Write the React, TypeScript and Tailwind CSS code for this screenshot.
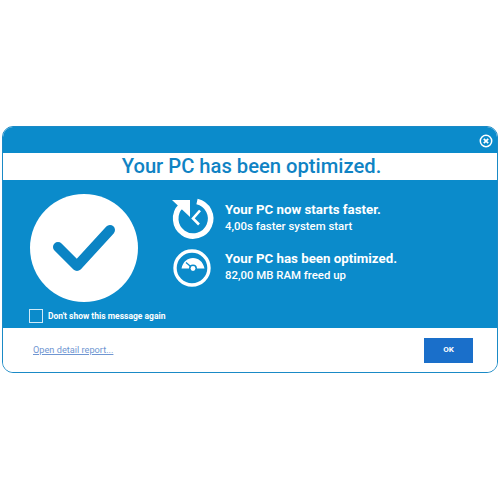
import { Fragment } from "react";

const rows = [
  { title: "Your PC now starts faster.", sub: "4,00s faster system start", icon: "clock" },
  { title: "Your PC has been optimized.", sub: "82,00 MB RAM freed up", icon: "gauge" },
];

function ClockIcon() {
  return (
    <svg width="46" height="46" viewBox="0 0 46 46" fill="none">
      <path d="M11 10A17.5 17.5 0 1 0 27 5.5" stroke="#fff" strokeWidth="5.6" />
      <path d="M2 4h18v17z" fill="#fff" />
      <path d="M30 14.5l-7 8 6 6" stroke="#fff" strokeWidth="2.6" />
    </svg>
  );
}

function GaugeIcon() {
  return (
    <svg width="42" height="42" viewBox="0 0 42 42" fill="none">
      <circle cx="21" cy="21" r="17" stroke="#fff" strokeWidth="3.4" />
      <path d="M10.5 21.5C12 14.5 16.5 11 22 11s10 3.5 11.5 10.5H26a4 4 0 0 0-8 0z" fill="#fff" />
      <path d="M22 21.5l-7-6" stroke="#0b8bcb" strokeWidth="1.3" />
      <circle cx="22" cy="21.5" r="2.4" fill="#fff" />
    </svg>
  );
}

export default function App() {
  return (
    <main className="w-[500px] h-[500px] bg-white px-[2px] pt-[126px] font-['Roboto',sans-serif]">
      <div className="h-[247px] rounded-[11px] border border-[#1a8ac6] overflow-hidden flex flex-col">
        <div className="h-[26px] bg-[#0b8bcb] flex items-center justify-end pr-[4px]">
          <svg width="14" height="14" viewBox="0 0 14 14" fill="none" className="mt-[1px]">
            <circle cx="7" cy="7" r="5.7" stroke="#fff" strokeWidth="1.5" />
            <path d="M4.8 4.8l4.4 4.4M9.2 4.8l-4.4 4.4" stroke="#fff" strokeWidth="1.7" />
          </svg>
        </div>

        <h1 className="h-[27px] bg-white pl-[3px] text-center text-[#0f83c4] text-[20.2px] font-medium leading-[27px]">
          Your PC has been optimized.
        </h1>

        <div className="h-[148px] bg-[#0b8bcb] flex">
          <div className="w-[170px] shrink-0 pl-[27px] pt-[14px] flex flex-col">
            <div className="w-[108px] h-[108px] rounded-full bg-white flex items-center justify-center">
              <svg width="64" height="50" viewBox="0 0 64 50" fill="none">
                <path d="M6 24l19 19L58 7" stroke="#0b84c4" strokeWidth="10" strokeLinecap="round" strokeLinejoin="round" />
              </svg>
            </div>
            <label className="mt-[7px] -ml-[1px] flex items-center gap-[5px] whitespace-nowrap">
              <span className="w-[14px] h-[14px] shrink-0 border border-[#cfeaf8] block" />
              <span className="text-white text-[8.5px] font-bold">Don't show this message again</span>
            </label>
          </div>

          <div className="pt-[15px] flex flex-col gap-[2px]">
            {rows.map((row) => (
              <Fragment key={row.title}>
                <div className="h-[47px] flex items-center -ml-[4px]">
                  <div className={row.icon === "clock" ? "w-[56px] pl-[1px]" : "w-[56px] pl-[2px]"}>
                    {row.icon === "clock" ? <ClockIcon /> : <GaugeIcon />}
                  </div>
                  <div className="text-white -mt-[2px]">
                    <p className="text-[13.3px] font-bold leading-[18px]">{row.title}</p>
                    <p className="text-[11.4px] font-medium leading-[15px]">{row.sub}</p>
                  </div>
                </div>
              </Fragment>
            ))}
          </div>
        </div>

        <div className="flex-1 bg-white flex items-center justify-between pl-[30px] pr-[24px]">
          <a className="text-[#6f96d2] text-[9.2px] underline">Open detail report...</a>
          <button className="w-[49px] h-[25px] bg-[#1a6fca] text-white text-[8px] font-bold">OK</button>
        </div>
      </div>
    </main>
  );
}
